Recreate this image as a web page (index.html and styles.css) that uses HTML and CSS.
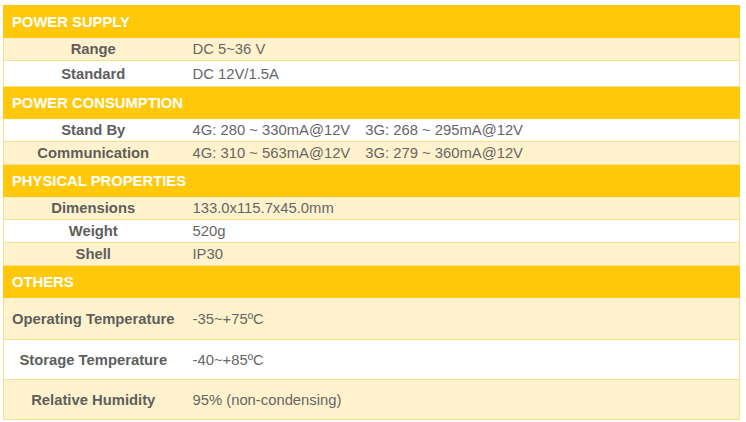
FILE: index.html
```html
<!DOCTYPE html>
<html>
<head>
<meta charset="utf-8">
<link rel="stylesheet" href="styles.css">
</head>
<body>
<table class="spec">
  <colgroup><col class="c-label"><col class="c-value"></colgroup>
  <tr class="head"><td colspan="2">POWER SUPPLY</td></tr>
  <tr class="alt"><th>Range</th><td>DC 5~36 V</td></tr>
  <tr class="row-std"><th>Standard</th><td>DC 12V/1.5A</td></tr>
  <tr class="head"><td colspan="2">POWER CONSUMPTION</td></tr>
  <tr><th>Stand By</th><td><span class="v4">4G: 280 ~ 330mA@12V</span><span>3G: 268 ~ 295mA@12V</span></td></tr>
  <tr class="alt"><th>Communication</th><td><span class="v4">4G: 310 ~ 563mA@12V</span><span>3G: 279 ~ 360mA@12V</span></td></tr>
  <tr class="head"><td colspan="2">PHYSICAL PROPERTIES</td></tr>
  <tr class="alt"><th>Dimensions</th><td>133.0x115.7x45.0mm</td></tr>
  <tr><th>Weight</th><td>520g</td></tr>
  <tr class="alt"><th>Shell</th><td>IP30</td></tr>
  <tr class="head"><td colspan="2">OTHERS</td></tr>
  <tr class="alt tall first"><th>Operating Temperature</th><td>-35~+75ºC</td></tr>
  <tr class="tall"><th>Storage Temperature</th><td>-40~+85ºC</td></tr>
  <tr class="alt tall"><th>Relative Humidity</th><td>95% (non-condensing)</td></tr>
</table>
</body>
</html>
```

FILE: styles.css
```css
html, body {
  margin: 0;
  padding: 0;
  background: #ffffff;
}
body {
  padding: 5px 6px 0 3px;
  font-family: "Liberation Sans", Arial, sans-serif;
}
.spec {
  width: 737px;
  border-collapse: collapse;
  table-layout: fixed;
  font-size: 14.8px;
  color: #666666;
}
.c-label { width: 179px; }
.spec td, .spec th {
  border-top: 1px solid #f7df92;
  border-bottom: 1px solid #f7df92;
  padding: 0;
  height: 22px;
  line-height: 16px;
}
.spec th {
  font-weight: bold;
  text-align: center;
  color: #5e5e5e;
  border-left: 1px solid #f7df92;
}
.spec td {
  padding-left: 10px;
  text-align: left;
  border-right: 1px solid #f7df92;
}
.spec tr.alt { background: #fff2cc; }
.spec tr.row-std td, .spec tr.row-std th { height: 25px; }
.spec tr.head td {
  background: #ffc80b;
  border: 1px solid #ffc80b;
  color: #ffffff;
  font-weight: bold;
  height: 31px;
  padding-left: 8px;
}
.spec tr.tall td, .spec tr.tall th { height: 39px; }
.spec tr.first td, .spec tr.first th { height: 41px; }
.v4 { margin-right: 15px; }
```
